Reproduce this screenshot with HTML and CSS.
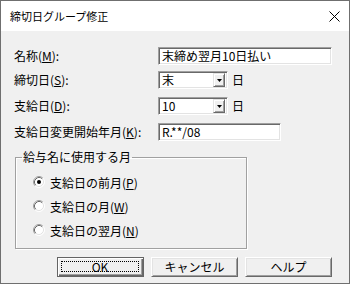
FILE: index.html
```html
<!DOCTYPE html>
<html lang="ja">
<head>
<meta charset="utf-8">
<link rel="stylesheet" href="styles.css">
</head>
<body>
<div class="window">
  <div class="titlebar">
    <span class="title">締切日グループ修正</span>
    <svg class="close" width="11" height="11" viewBox="0 0 11 11"><path d="M0.5 0.5 L10.5 10.5 M10.5 0.5 L0.5 10.5" stroke="#000" stroke-width="1" fill="none"/></svg>
  </div>
  <div class="body">
    <div class="row r1">
      <span class="lbl">名称(<u>M</u>):</span>
      <div class="edit name">末締め翌月10日払い</div>
    </div>
    <div class="row r2">
      <span class="lbl">締切日(<u>S</u>):</span>
      <div class="edit combo"><span class="val">末</span><span class="dd"><svg width="5" height="3" viewBox="0 0 5 3"><path d="M0 0 H5 L2.5 3 Z" fill="#000"/></svg></span></div>
      <span class="unit">日</span>
    </div>
    <div class="row r3">
      <span class="lbl">支給日(<u>D</u>):</span>
      <div class="edit combo"><span class="val">10</span><span class="dd"><svg width="5" height="3" viewBox="0 0 5 3"><path d="M0 0 H5 L2.5 3 Z" fill="#000"/></svg></span></div>
      <span class="unit">日</span>
    </div>
    <div class="row r4">
      <span class="lbl">支給日変更開始年月(<u>K</u>):</span>
      <div class="edit ym">R.**/08</div>
    </div>
    <fieldset class="group">
      <legend>給与名に使用する月</legend>
      <div class="radio"><svg width="12" height="12" viewBox="0 0 12 12"><circle cx="6" cy="6" r="5" fill="#fff"/><path d="M2.11 9.89 A5.5 5.5 0 0 1 9.89 2.11" stroke="#a0a0a0" fill="none"/><path d="M9.89 2.11 A5.5 5.5 0 0 1 2.11 9.89" stroke="#fff" fill="none"/><path d="M2.82 9.18 A4.5 4.5 0 0 1 9.18 2.82" stroke="#696969" fill="none"/><path d="M9.18 2.82 A4.5 4.5 0 0 1 2.82 9.18" stroke="#e3e3e3" fill="none"/><circle cx="6" cy="6" r="2" fill="#000"/></svg><span>支給日の前月(<u>P</u>)</span></div>
      <div class="radio"><svg width="12" height="12" viewBox="0 0 12 12"><circle cx="6" cy="6" r="5" fill="#fff"/><path d="M2.11 9.89 A5.5 5.5 0 0 1 9.89 2.11" stroke="#a0a0a0" fill="none"/><path d="M9.89 2.11 A5.5 5.5 0 0 1 2.11 9.89" stroke="#fff" fill="none"/><path d="M2.82 9.18 A4.5 4.5 0 0 1 9.18 2.82" stroke="#696969" fill="none"/><path d="M9.18 2.82 A4.5 4.5 0 0 1 2.82 9.18" stroke="#e3e3e3" fill="none"/></svg><span>支給日の月(<u>W</u>)</span></div>
      <div class="radio"><svg width="12" height="12" viewBox="0 0 12 12"><circle cx="6" cy="6" r="5" fill="#fff"/><path d="M2.11 9.89 A5.5 5.5 0 0 1 9.89 2.11" stroke="#a0a0a0" fill="none"/><path d="M9.89 2.11 A5.5 5.5 0 0 1 2.11 9.89" stroke="#fff" fill="none"/><path d="M2.82 9.18 A4.5 4.5 0 0 1 9.18 2.82" stroke="#696969" fill="none"/><path d="M9.18 2.82 A4.5 4.5 0 0 1 2.82 9.18" stroke="#e3e3e3" fill="none"/></svg><span>支給日の翌月(<u>N</u>)</span></div>
    </fieldset>
    <div class="buttons">
      <div class="btn default"><span class="focus">OK</span></div>
      <div class="btn">キャンセル</div>
      <div class="btn">ヘルプ</div>
    </div>
  </div>
</div>
</body>
</html>
```
FILE: styles.css
```css
html, body {
  margin: 0;
  padding: 0;
}
body {
  width: 350px;
  height: 284px;
  font-family: "Noto Sans CJK JP", "Noto Sans", sans-serif;
  font-size: 12px;
  color: #000;
}
u {
  text-decoration: underline;
  text-underline-offset: 1px;
}
.window {
  box-sizing: border-box;
  width: 350px;
  height: 284px;
  border: 1px solid #6f6f6f;
  background: #f0f0f0;
  display: flex;
  flex-direction: column;
}
.titlebar {
  height: 30px;
  flex: none;
  background: #fff;
  display: flex;
  align-items: center;
  justify-content: space-between;
  padding: 0 9px 0 9px;
}
.title {
  font-size: 11px;
  line-height: 14px;
}
.close {
  display: block;
}
.body {
  flex: 1;
  display: flex;
  flex-direction: column;
  padding: 16px 17px 0 13px;
}
.row {
  display: flex;
  align-items: center;
  height: 18px;
}
.r2 { margin-top: 6px; }
.r3 { margin-top: 8px; }
.r4 { margin-top: 8px; }
.lbl {
  width: 144px;
  flex: none;
  line-height: 16px;
}
.edit {
  box-sizing: border-box;
  height: 18px;
  background: #fff;
  border-style: solid;
  border-width: 1px;
  border-color: #a0a0a0 #fff #fff #a0a0a0;
  box-shadow: inset 1px 1px 0 #696969, inset -1px -1px 0 #e3e3e3;
  padding: 0 2px 0 3px;
  line-height: 16px;
  white-space: nowrap;
  overflow: hidden;
}
.name { width: 175px; }
.ym { width: 123px; }
.combo {
  width: 70px;
  display: flex;
  align-items: center;
  padding: 1px 2px 1px 3px;
}
.combo .val {
  flex: 1;
  line-height: 14px;
}
.dd {
  box-sizing: border-box;
  width: 12px;
  height: 14px;
  background: #f0f0f0;
  border-style: solid;
  border-width: 1px;
  border-color: #e3e3e3 #696969 #696969 #e3e3e3;
  box-shadow: inset 1px 1px 0 #fff, inset -1px -1px 0 #a0a0a0;
  display: flex;
  align-items: center;
  justify-content: center;
}
.dd svg { display: block; }
.unit {
  margin-left: 4px;
  line-height: 16px;
}
.group {
  margin: 8px 0 0 1px;
  padding: 5px 0 0 17px;
  width: 232px;
  height: 100px;
  box-sizing: border-box;
  border: 1px solid #a0a0a0;
  box-shadow: inset 1px 1px 0 #fff, 1px 1px 0 #fff;
  min-width: 0;
}
.group legend {
  margin-left: -11px;
  padding: 0 1px;
  line-height: 16px;
}
.radio {
  display: flex;
  align-items: center;
  height: 24px;
}
.radio svg {
  display: block;
  flex: none;
  margin-right: 5px;
}
.buttons {
  margin-top: 8px;
  display: flex;
  justify-content: flex-end;
  gap: 7px;
}
.btn {
  box-sizing: border-box;
  width: 87px;
  height: 20px;
  background: #f0f0f0;
  border-style: solid;
  border-width: 1px;
  border-color: #fff #696969 #696969 #fff;
  box-shadow: inset 1px 1px 0 #e3e3e3, inset -1px -1px 0 #a0a0a0;
  display: flex;
  align-items: center;
  justify-content: center;
  line-height: 16px;
}
.btn.default {
  border-color: #646464;
  box-shadow: inset 1px 1px 0 #fff, inset -1px -1px 0 #696969, inset -2px -2px 0 #a0a0a0;
  padding: 3px 4px 4px 3px;
}
.focus {
  box-sizing: border-box;
  width: 100%;
  height: 100%;
  border: 1px dotted #000;
  display: flex;
  align-items: center;
  justify-content: center;
  line-height: 12px;
}
```
